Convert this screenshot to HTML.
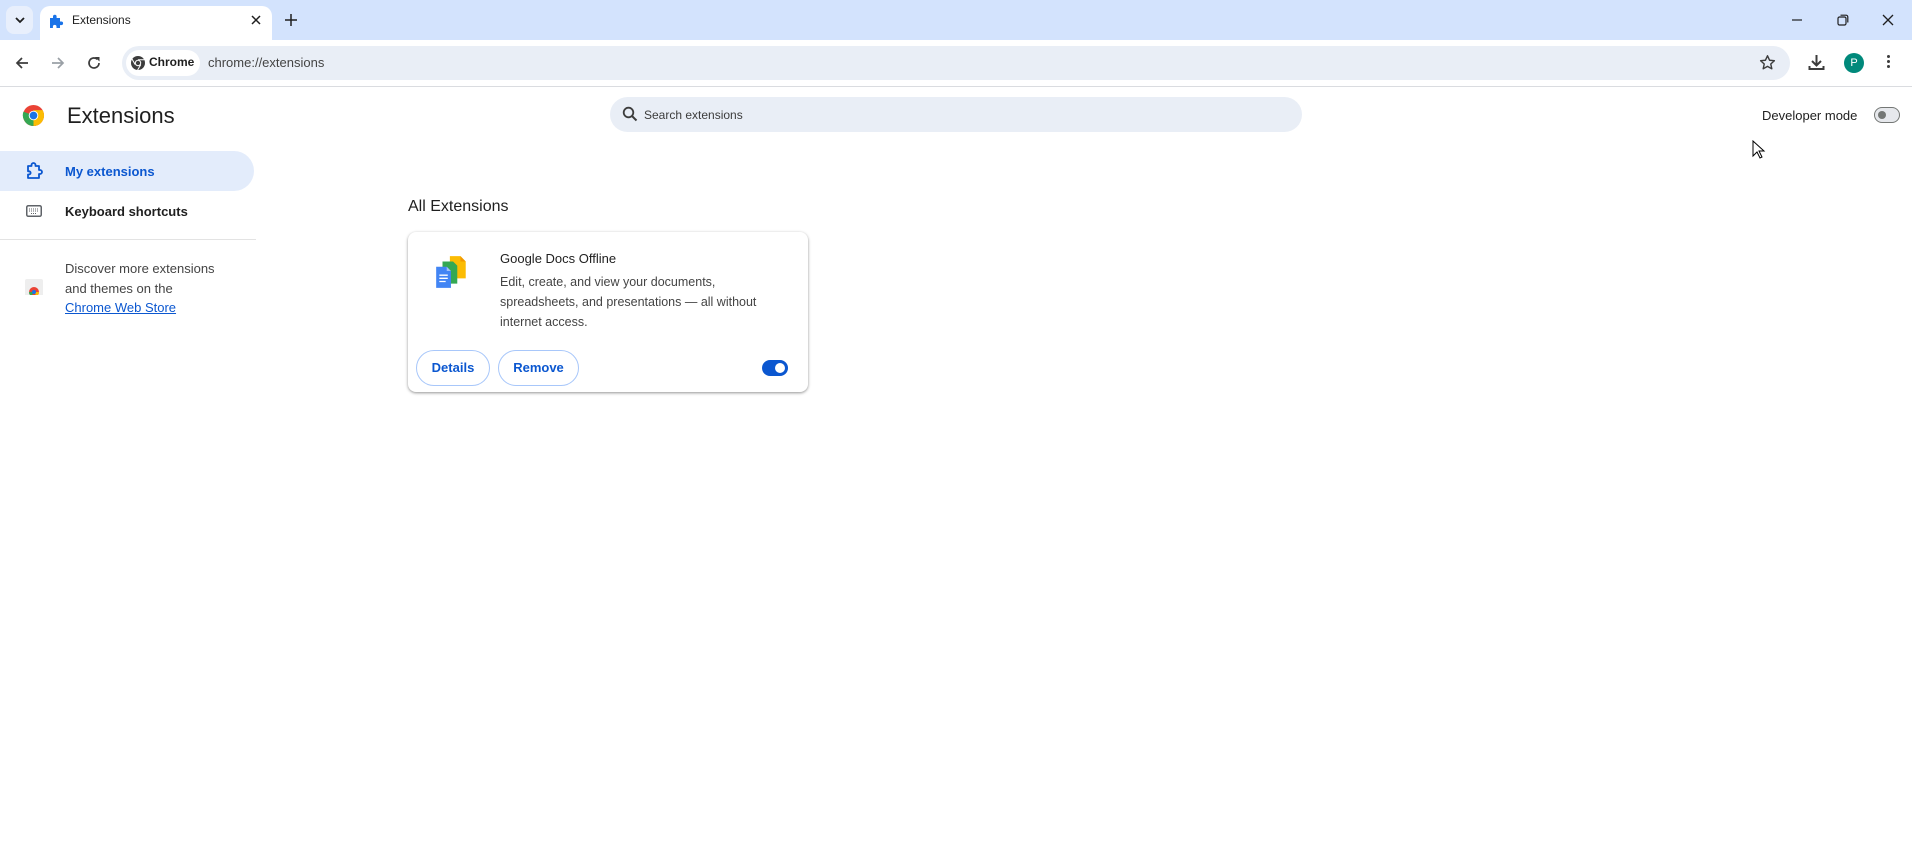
<!DOCTYPE html>
<html><head><meta charset="utf-8"><style>
*{margin:0;padding:0;box-sizing:border-box}
body{width:1912px;height:866px;background:#fff;font-family:"Liberation Sans",sans-serif;color:#1f1f1f;position:relative;overflow:hidden}
.a{position:absolute}
.t{white-space:nowrap}
</style></head><body>
<!-- tab strip -->
<div class="a" style="left:0;top:0;width:1912px;height:40px;background:#d3e3fd"></div>
<div class="a" style="left:6px;top:6px;width:27px;height:28px;border-radius:8px;background:#e8effc"></div>
<svg class="a" style="left:14px;top:15px" width="12" height="10"><path d="M2 3l4 4 4-4" stroke="#1f1f1f" stroke-width="1.8" fill="none"/></svg>
<div class="a" style="left:40px;top:6px;width:232px;height:36px;background:#fff;border-radius:10px 10px 0 0"></div>
<svg class="a" style="left:48px;top:13px" width="16" height="16" viewBox="0 0 16 16"><path d="M2 5h3V3.5a1.8 1.8 0 013.6 0V5H12v3.5h1.3a1.8 1.8 0 010 3.6H12V15H8.5v-1.3a1.8 1.8 0 00-3.6 0V15H2z" fill="#1a73e8"/></svg>
<div class="a t" style="left:72px;top:13px;font-size:12px">Extensions</div>
<svg class="a" style="left:251px;top:15px" width="10" height="10"><path d="M1 1l8 8M9 1l-8 8" stroke="#1f1f1f" stroke-width="1.5"/></svg>
<svg class="a" style="left:285px;top:14px" width="12" height="12"><path d="M6 0v12M0 6h12" stroke="#1f1f1f" stroke-width="1.5"/></svg>
<svg class="a" style="left:1791px;top:15px" width="12" height="10"><path d="M1 5h10" stroke="#1f1f1f" stroke-width="1.2"/></svg>
<svg class="a" style="left:1837px;top:14px" width="12" height="12"><rect x="1" y="3" width="8" height="8" rx="1.5" stroke="#1f1f1f" fill="none" stroke-width="1.2"/><path d="M3.5 1.2h5.5a1.8 1.8 0 011.8 1.8v5.5" stroke="#1f1f1f" fill="none" stroke-width="1.2"/></svg>
<svg class="a" style="left:1882px;top:14px" width="12" height="12"><path d="M1 1l10 10M11 1L1 11" stroke="#1f1f1f" stroke-width="1.3"/></svg>
<!-- toolbar -->
<div class="a" style="left:0;top:40px;width:1912px;height:46px;background:#fff"></div>
<div class="a" style="left:0;top:86px;width:1912px;height:1px;background:#dadce0"></div>
<svg class="a" style="left:14px;top:55px" width="16" height="16"><path d="M14 8H3M8 3L3 8l5 5" stroke="#3c3c3c" stroke-width="1.7" fill="none"/></svg>
<svg class="a" style="left:50px;top:55px" width="16" height="16"><path d="M2 8h11M8 3l5 5-5 5" stroke="#9aa0a6" stroke-width="1.7" fill="none"/></svg>
<svg class="a" style="left:86px;top:55px" width="16" height="16"><path d="M13 8a5 5 0 11-1.5-3.6" stroke="#3c3c3c" stroke-width="1.7" fill="none"/><path d="M9 2h4.5v4.5z" fill="#3c3c3c"/></svg>
<div class="a" style="left:122px;top:46px;width:1668px;height:34px;border-radius:17px;background:#e9eef6"></div>
<div class="a" style="left:126px;top:50px;width:74px;height:26px;border-radius:13px;background:#fff"></div>
<svg class="a" style="left:130px;top:55px" width="16" height="16" viewBox="0 0 16 16"><circle cx="8" cy="8" r="7" fill="#3c3c3c"/><circle cx="8" cy="8" r="3.2" fill="#fff"/><circle cx="8" cy="8" r="2.2" fill="#3c3c3c"/><path d="M8 4.8h6.4M5.2 9.6L2 4M10.8 9.6L7.6 15" stroke="#fff" stroke-width="1"/></svg>
<div class="a t" style="left:149px;top:55px;font-size:12px;font-weight:bold;color:#1f1f1f">Chrome</div>
<div class="a t" style="left:208px;top:55px;font-size:13px;color:#444">chrome://extensions</div>
<svg class="a" style="left:1759px;top:54px" width="17" height="17" viewBox="0 0 24 24"><path d="M12 2.5l2.9 6.3 6.8.7-5.1 4.6 1.5 6.8L12 17.4l-6.1 3.5 1.5-6.8-5.1-4.6 6.8-.7z" stroke="#3c3c3c" stroke-width="2" fill="none" stroke-linejoin="round"/></svg>
<svg class="a" style="left:1808px;top:54px" width="17" height="17" viewBox="0 0 17 17"><path d="M8.5 1v10M4 7l4.5 4.5L13 7M1.5 12v3h14v-3" stroke="#3c3c3c" stroke-width="2" fill="none"/></svg>
<div class="a" style="left:1844px;top:53px;width:20px;height:20px;border-radius:50%;background:#00897b;color:#fff;font-size:11px;text-align:center;line-height:20px">P</div>
<div class="a" style="left:1887px;top:55px;width:3px;height:3px;border-radius:50%;background:#3c3c3c;box-shadow:0 5px 0 #3c3c3c,0 10px 0 #3c3c3c"></div>
<!-- header -->
<svg class="a" style="left:22px;top:104px" width="23" height="23" viewBox="0 0 24 24"><circle cx="12" cy="12" r="11" fill="#ea4335"/><path d="M12 12L2.5 17.5A11 11 0 0012 23z" fill="#34a853"/><path d="M12 12l-9.5 5.5A11 11 0 011.5 8z" fill="#34a853"/><path d="M12 12V23a11 11 0 009.5-16.5H12z" fill="#fbbc04"/><path d="M12 6.5h9.5A11 11 0 0023 12L12 23z" fill="#fbbc04"/><circle cx="12" cy="12" r="5" fill="#fff"/><circle cx="12" cy="12" r="4" fill="#1a73e8"/></svg>
<div class="a t" style="left:67px;top:103px;font-size:22px;color:#1f1f1f">Extensions</div>
<div class="a" style="left:610px;top:97px;width:692px;height:35px;border-radius:18px;background:#e9eef6"></div>
<svg class="a" style="left:622px;top:106px" width="16" height="16"><circle cx="6.5" cy="6.5" r="4.8" stroke="#3c3c3c" stroke-width="1.8" fill="none"/><path d="M10 10l4.5 4.5" stroke="#3c3c3c" stroke-width="2"/></svg>
<div class="a t" style="left:644px;top:108px;font-size:12px;color:#3c3c3c">Search extensions</div>
<div class="a t" style="left:1762px;top:108px;font-size:13px;color:#1f1f1f">Developer mode</div>
<div class="a" style="left:1874px;top:107px;width:26px;height:16px;border-radius:8px;border:1.5px solid #747775;background:#e6e8ec"></div>
<div class="a" style="left:1878px;top:111px;width:8px;height:8px;border-radius:50%;background:#747775"></div>
<!-- cursor -->
<svg class="a" style="left:1752px;top:140px" width="14" height="20" viewBox="0 0 14 20"><path d="M1 1v15l4-4 3 6 2-1-3-6h5z" fill="#fff" stroke="#000" stroke-width="1"/></svg>
<!-- sidebar -->
<div class="a" style="left:0;top:151px;width:254px;height:40px;border-radius:0 20px 20px 0;background:#e3ecfb"></div>
<svg class="a" style="left:26px;top:162px" width="18" height="18" viewBox="0 0 18 18"><path d="M2 4h3.5V3a2 2 0 014 0v1H13v4h1a2 2 0 010 4h-1v4H2v-3.5h1a1.6 1.6 0 000-3.2H2z" stroke="#0b57d0" stroke-width="1.8" fill="none" stroke-linejoin="round"/></svg>
<div class="a t" style="left:65px;top:164px;font-size:13px;font-weight:bold;color:#0b57d0">My extensions</div>
<svg class="a" style="left:26px;top:205px" width="16" height="12"><rect x=".75" y=".75" width="14.5" height="10.5" rx="1.5" stroke="#5f6368" stroke-width="1.5" fill="none"/><path d="M3 4h10M3 6h10M5 8.5h6" stroke="#5f6368" stroke-width="1" stroke-dasharray="1 1"/></svg>
<div class="a t" style="left:65px;top:204px;font-size:13px;font-weight:bold;color:#1f1f1f">Keyboard shortcuts</div>
<div class="a" style="left:0;top:239px;width:256px;height:1px;background:#e3e3e3"></div>
<svg class="a" style="left:24px;top:278px" width="20" height="20" viewBox="0 0 20 20"><rect x="1" y="1" width="18" height="19" rx="2" fill="#eee"/><circle cx="10" cy="14" r="5" fill="#ea4335"/><path d="M10 14L5 14a5 5 0 002.5 4.3z" fill="#34a853"/><path d="M10 14l5 0a5 5 0 01-2.5 4.3z" fill="#fbbc04"/><circle cx="10" cy="14" r="2" fill="#1a73e8"/><rect x="0" y="17" width="20" height="3" fill="#fff"/></svg>
<div class="a" style="left:65px;top:259px;font-size:13px;line-height:19.5px;color:#444">Discover more extensions<br>and themes on the<br><span style="color:#0b57d0;text-decoration:underline">Chrome Web Store</span></div>
<!-- main -->
<div class="a t" style="left:408px;top:198px;font-size:16px;color:#1f1f1f">All Extensions</div>
<div class="a" style="left:408px;top:232px;width:400px;height:160px;border-radius:8px;background:#fff;box-shadow:0 1px 3px rgba(0,0,0,.3),0 1px 2px rgba(0,0,0,.15)"></div>
<svg class="a" style="left:433px;top:253px" width="38" height="38" viewBox="0 0 36 36"><path d="M16 3h10l5 5v16H16z" fill="#fbbc04"/><path d="M26 3l5 5h-5z" fill="#f29900"/><path d="M9 8h10l4 4v17H9z" fill="#34a853"/><path d="M3 13h10l4 4v16H3z" fill="#4285f4"/><path d="M13 13l4 4h-4z" fill="#a1c2fa"/><path d="M6 21h8M6 24h8M6 27h6" stroke="#fff" stroke-width="1.3"/></svg>
<div class="a t" style="left:500px;top:251px;font-size:13px;color:#1f1f1f">Google Docs Offline</div>
<div class="a" style="left:500px;top:272px;width:290px;font-size:12.5px;line-height:20px;color:#444">Edit, create, and view your documents,<br>spreadsheets, and presentations — all without<br>internet access.</div>
<div class="a" style="left:416px;top:350px;width:74px;height:36px;border-radius:18px;border:1px solid #a8c7fa;color:#0b57d0;font-size:13px;font-weight:bold;text-align:center;line-height:34px">Details</div>
<div class="a" style="left:498px;top:350px;width:81px;height:36px;border-radius:18px;border:1px solid #a8c7fa;color:#0b57d0;font-size:13px;font-weight:bold;text-align:center;line-height:34px">Remove</div>
<div class="a" style="left:762px;top:360px;width:26px;height:16px;border-radius:8px;background:#0b57d0"></div>
<div class="a" style="left:775px;top:363px;width:10px;height:10px;border-radius:50%;background:#fff"></div>
</body></html>
